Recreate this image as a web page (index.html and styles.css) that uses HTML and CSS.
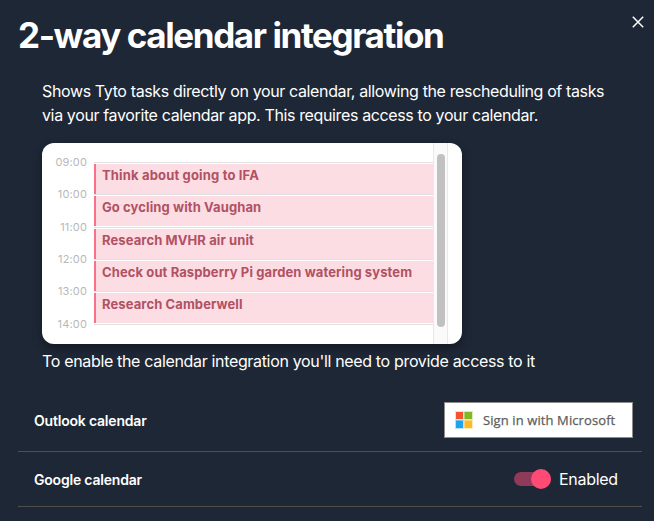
FILE: index.html
```html
<!DOCTYPE html>
<html lang="en">
<head>
<meta charset="utf-8">
<title>2-way calendar integration</title>
<link rel="stylesheet" href="styles.css">
</head>
<body>
<main class="dialog">
  <header class="header">
    <h1 class="title">2-way calendar integration</h1>
    <button class="close" aria-label="Close"><svg width="12" height="12" viewBox="0 0 12 12"><path d="M.8.8 11.2 11.2M11.2.8.8 11.2" stroke="#fff" stroke-width="1.5" fill="none"/></svg></button>
  </header>
  <section class="content">
    <p class="intro">Shows Tyto tasks directly on your calendar, allowing the rescheduling of tasks<br>via your favorite calendar app. This requires access to your calendar.</p>
    <div class="preview">
      <div class="hours"><span>09:00</span><span>10:00</span><span>11:00</span><span>12:00</span><span>13:00</span><span>14:00</span></div>
      <div class="slots">
        <div class="slot"><div class="event wide">Think about going to IFA</div></div>
        <div class="slot"><div class="event">Go cycling with Vaughan</div></div>
        <div class="slot"><div class="event">Research MVHR air unit</div></div>
        <div class="slot"><div class="event">Check out Raspberry Pi garden watering system</div></div>
        <div class="slot"><div class="event">Research Camberwell</div></div>
        <div class="slot"></div>
      </div>
      <div class="track"><div class="thumb"></div></div>
    </div>
    <p class="note">To enable the calendar integration you'll need to provide access to it</p>
  </section>
  <section class="accounts">
    <div class="account outlook">
      <span class="name">Outlook calendar</span>
      <button class="microsoft">
        <svg width="18" height="18" viewBox="0 0 18 18"><path fill="#fbdcca" d="M0 0h9v9H0z"/><path fill="#dcebc3" d="M9 0h9v9H9z"/><path fill="#b9e2f8" d="M0 9h9v9H0z"/><path fill="#fdebc3" d="M9 9h9v9H9z"/><path fill="#f25430" d="M1 1h7v7H1z"/><path fill="#80b922" d="M9.5 1H17v7H9.5z"/><path fill="#1ca5ee" d="M1 9.5h7V17H1z"/><path fill="#fdb82b" d="M9.5 9.5H17V17H9.5z"/></svg>
        <span>Sign in with Microsoft</span>
      </button>
    </div>
    <div class="account google">
      <span class="name">Google calendar</span>
      <div class="toggle"><span class="switch"><span class="knob"></span></span><span class="state">Enabled</span></div>
    </div>
  </section>
</main>
</body>
</html>
```
FILE: styles.css
```css
* { box-sizing: border-box; }
body { margin: 0; background: #1e2736; color: #fff; font-family: Inter, "Liberation Sans", sans-serif; }
button { border: 0; margin: 0; padding: 0; background: none; font: inherit; }
.dialog { height: 521px; overflow: hidden; }
.header { height: 79px; display: flex; justify-content: space-between; padding: 14px 10px 0 18px; }
.title { margin: 0; font-size: 35px; line-height: 42px; font-weight: 750; letter-spacing: -1.4px; white-space: nowrap; }
.close { width: 12px; height: 12px; margin-top: 2px; }
.close svg { display: block; }
.content { padding-left: 42px; }
.intro, .note { margin: 0; font-size: 16px; line-height: 24px; letter-spacing: -0.37px; white-space: nowrap; }
.preview { width: 420px; height: 201px; margin-top: 16px; border-radius: 12px; background: #fff; display: flex; overflow: hidden; box-shadow: 0 4px 10px rgba(0, 0, 0, .35); }
.hours { width: 52px; padding: 11px 7px 0 0; display: grid; grid-template-rows: 32px 33px 32px 32px 33px 16px; text-align: right; font-size: 11px; letter-spacing: 0.15px; line-height: 16px; color: #b8b8b8; }
.slots { width: 339px; padding-top: 19px; display: grid; grid-template-rows: 32px 33px 32px 32px 33px 20px; }
.slot { border-top: 1px solid #e1e1e3; padding-top: 1px; }
.event { height: 30px; border-left: 2px solid #fa7089; background: #fcdde3; color: #b15163; padding-left: 6px; font-size: 13px; line-height: 23px; font-weight: 700; letter-spacing: 0.1px; white-space: nowrap; }
.wide { letter-spacing: 0.16px; }
.track { width: 15px; border: solid #e8e8e8; border-width: 0 1px; background: #fafafa; padding: 11px 0 0 3px; }
.thumb { width: 8px; height: 173px; border-radius: 4px; background: #c1c1c1; }
.note { margin-top: 5px; letter-spacing: -0.335px; }
.accounts { margin: 17px 12px 0 18px; }
.account { display: flex; align-items: center; justify-content: space-between; padding-left: 16px; border-bottom: 1px solid #504f4e; }
.outlook { height: 62px; padding-right: 9px; }
.google { height: 55px; padding-right: 24px; }
.name { font-size: 14px; font-weight: 600; letter-spacing: -0.2px; }
.microsoft { width: 189px; height: 36px; margin-bottom: 2px; border: 1px solid #8c8c8c; background: #fff; display: flex; align-items: center; padding-left: 10px; gap: 10px; color: #5e5e5e; font: 500 13px/20px "Open Sans", sans-serif; letter-spacing: 0.1px; -webkit-text-stroke: 0.25px #5e5e5e; white-space: nowrap; }
.toggle { display: flex; align-items: center; gap: 8px; }
.switch { width: 37px; height: 14px; border-radius: 7px; background: #8e3a58; display: flex; align-items: center; justify-content: flex-end; }
.knob { width: 20px; height: 20px; flex: none; border-radius: 50%; background: #ff4a76; }
.state { width: 59px; font-size: 16px; line-height: 24px; letter-spacing: -0.3px; }
```
